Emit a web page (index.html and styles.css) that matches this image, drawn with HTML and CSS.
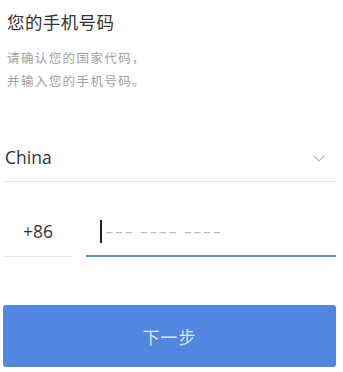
FILE: index.html
```html
<!DOCTYPE html>
<html lang="zh-CN">
<head>
    <meta charset="UTF-8">
    <meta name="viewport" content="width=device-width">
    <title>您的手机号码</title>
    <link rel="stylesheet" href="styles.css">
</head>
<body>

<div class=page>
  <h2 class=title>您的手机号码</h2>
  <p class=hint>请确认您的国家代码，<br>并输入您的手机号码。</p>

  <div class=country>
    <span>China</span>
    <svg class=chevron width="12" height="7" viewBox="0 0 12 7">
      <path d="M0.5 0.5 L6 6 L11.5 0.5" fill="none" stroke="#bbb" stroke-width="1.2"/>
    </svg>
  </div>

  <div class=phone>
    <div class=code>+86</div>
    <div class=number>
      <span class=caret></span>
      <span class=holder>––– –––– ––––</span>
    </div>
  </div>

  <button class=next>下一步</button>
</div>

</body>
</html>
```

FILE: styles.css
```css
body {
    margin: 0;
    background: white;
    font-family: "Open Sans", "Noto Sans CJK SC", sans-serif;
    color: #333;
}
.page {
    width: 333px;
    padding: 10px 0 0 3px;
}
.title {
    font: 17.5px/24px "Noto Sans CJK SC", sans-serif;
    letter-spacing: 0.4px;
    color: #333;
    margin: 0;
    padding-left: 4px;
}
.hint {
    font: 12.5px/23px "Noto Sans CJK SC", sans-serif;
    letter-spacing: 1.4px;
    color: #a0a0a0;
    margin: 12px 0 0;
    padding-left: 4px;
}
.country {
    display: flex;
    align-items: center;
    justify-content: space-between;
    height: 50px;
    box-sizing: border-box;
    margin-top: 40px;
    padding: 0 11px 0 2px;
    border-bottom: 1px solid #e6e6e6;
    font-size: 17.5px;
}
.chevron {
    margin-top: 4px;
}
.phone {
    display: flex;
    align-items: flex-end;
    margin-top: 25px;
    height: 50px;
}
.code {
    width: 70px;
    margin-right: 13px;
    height: 49px;
    line-height: 48px;
    text-align: center;
    font-size: 17.5px;
    border-bottom: 1px solid #e6e6e6;
}
.number {
    flex: 1;
    display: flex;
    align-items: center;
    height: 48px;
    padding-left: 14px;
    border-bottom: 2px solid #5a8ee0;
}
.caret {
    width: 1.5px;
    height: 23px;
    background: #222;
    margin-right: 4px;
}
.holder {
    font-size: 15.5px;
    letter-spacing: 1.8px;
    color: #bdbdbd;
}
.next {
    display: block;
    width: 100%;
    height: 62px;
    margin-top: 48px;
    border: none;
    border-radius: 3px;
    background: #5187de;
    color: rgba(255,255,255,0.8);
    font: 17px "Noto Sans CJK SC", sans-serif;
    letter-spacing: 1px;
}
```
